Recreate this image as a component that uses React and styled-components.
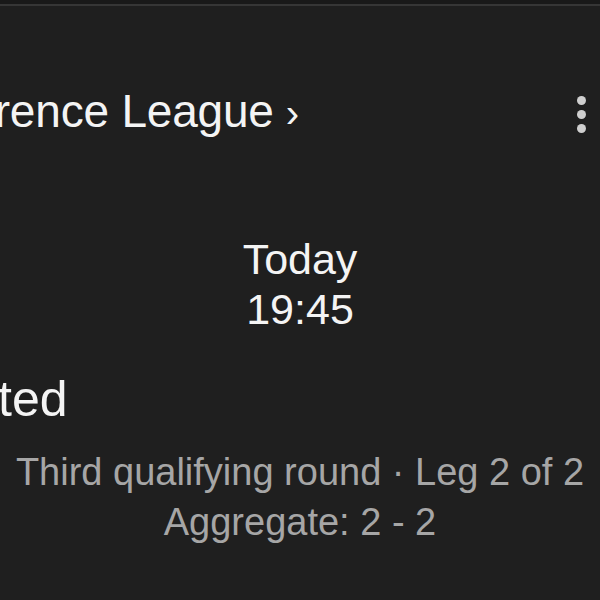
import React from "react";
import styled, { createGlobalStyle } from "styled-components";

const Global = createGlobalStyle`
  html, body { margin: 0; padding: 0; background: #1f1f1f; }
  body { font-family: "Liberation Sans", Arial, sans-serif; }
`;

const Screen = styled.div`
  width: 600px;
  height: 600px;
  overflow: hidden;
  background: #1f1f1f;
  display: flex;
  flex-direction: column;
`;

const StatusStrip = styled.div`
  height: 4px;
  background: #191919;
  border-bottom: 2px solid #363636;
  flex: none;
`;

const Header = styled.header`
  display: flex;
  align-items: flex-start;
  padding: 82px 14px 0 0;
`;

const LeagueTitle = styled.div`
  margin-left: -127px;
  font-size: 46px;
  line-height: 46px;
  color: #f4f4f4;
  white-space: nowrap;
  letter-spacing: -0.2px;
`;

const Chevron = styled.span`
  margin-left: 12px;
  font-size: 40px;
`;

const Kebab = styled.button`
  margin-left: auto;
  margin-top: 8px;
  background: none;
  border: 0;
  padding: 0;
  display: flex;
  flex-direction: column;
  gap: 5px;
`;

const Dot = styled.span`
  width: 9px;
  height: 9px;
  border-radius: 50%;
  background: #cfcfcf;
`;

const Kickoff = styled.div`
  margin-top: 98px;
  display: flex;
  flex-direction: column;
  align-items: center;
  color: #f4f4f4;
  font-size: 43px;
  line-height: 50px;
`;

const TeamName = styled.div`
  margin: 38px 0 0 -77px;
  font-size: 50px;
  line-height: 54px;
  color: #f4f4f4;
  white-space: nowrap;
`;

const MatchInfo = styled.div`
  margin-top: 21px;
  display: flex;
  flex-direction: column;
  align-items: center;
  color: #a6a6a6;
  font-size: 38px;
  line-height: 50px;
  white-space: nowrap;
`;

export default function App() {
  return (
    <>
      <Global />
      <Screen>
        <StatusStrip />
        <Header>
          <LeagueTitle>
            Conference League<Chevron>›</Chevron>
          </LeagueTitle>
          <Kebab aria-label="More">
            <Dot />
            <Dot />
            <Dot />
          </Kebab>
        </Header>
        <Kickoff>
          <span>Today</span>
          <span>19:45</span>
        </Kickoff>
        <TeamName>United</TeamName>
        <MatchInfo>
          <span>Third qualifying round · Leg 2 of 2</span>
          <span>Aggregate: 2 - 2</span>
        </MatchInfo>
      </Screen>
    </>
  );
}
